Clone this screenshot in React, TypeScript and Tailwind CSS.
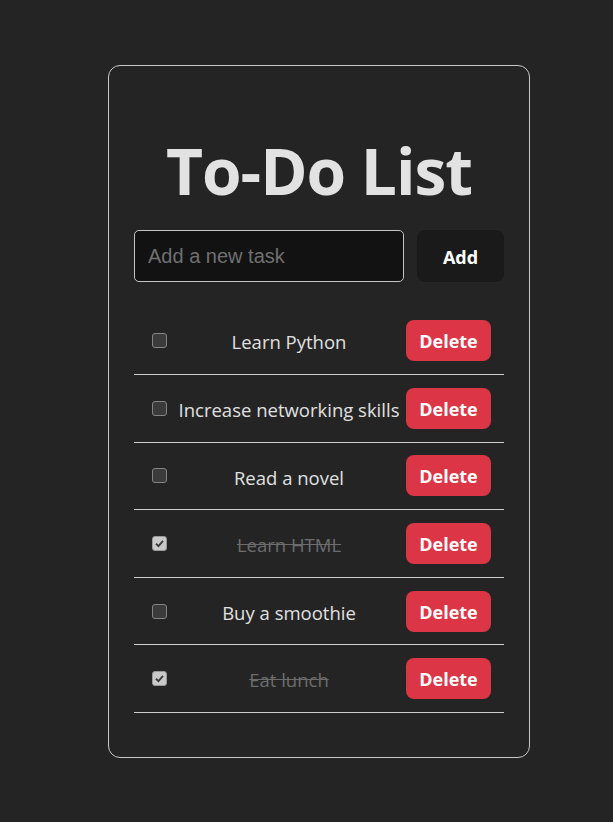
import { useState } from 'react';

interface Task {
  id: number;
  text: string;
  done: boolean;
}

const initialTasks: Task[] = [
  { id: 1, text: 'Learn Python', done: false },
  { id: 2, text: 'Increase networking skills', done: false },
  { id: 3, text: 'Read a novel', done: false },
  { id: 4, text: 'Learn HTML', done: true },
  { id: 5, text: 'Buy a smoothie', done: false },
  { id: 6, text: 'Eat lunch', done: true },
];

function Checkbox({ checked, onToggle }: { checked: boolean; onToggle: () => void }) {
  return (
    <button
      onClick={onToggle}
      className={
        checked
          ? 'w-[15px] h-[15px] shrink-0 rounded-[3px] bg-[#c9c9c9] border border-[#9a9a9a] flex items-center justify-center'
          : 'w-[15px] h-[15px] shrink-0 rounded-[3px] bg-[#3b3b3b] border border-[#858585]'
      }
    >
      {checked && (
        <svg viewBox="0 0 12 12" className="w-[11px] h-[11px]">
          <path d="M2.2 6.3 L4.9 8.9 L9.8 3.2" fill="none" stroke="#3a3a3a" strokeWidth="2" />
        </svg>
      )}
    </button>
  );
}

export default function App() {
  const [tasks, setTasks] = useState<Task[]>(initialTasks);
  const [draft, setDraft] = useState('');

  const addTask = () => {
    if (!draft.trim()) return;
    setTasks([...tasks, { id: Date.now(), text: draft.trim(), done: false }]);
    setDraft('');
  };

  return (
    <div className="min-h-[822px] bg-[#242424] pt-[65px]" style={{ fontFamily: '"Open Sans", "Noto Sans", sans-serif' }}>
      <div className="ml-[108px] w-[422px] border border-[#c8c8c8] rounded-[12px] px-[25px] pt-[70px] pb-[44px]">
        <h1 className="text-center text-[64px] leading-[1.1] font-bold text-[#e2e2e2] tracking-[-1px]">
          To-Do List
        </h1>

        <div className="flex gap-[13px] mt-[24px]">
          <input
            value={draft}
            onChange={(e) => setDraft(e.target.value)}
            placeholder="Add a new task"
            className="flex-1 min-w-0 h-[52px] rounded-[5px] border border-[#c4c4c4] bg-[#121212] px-[13px] text-[20px] text-[#dedede] placeholder:text-[#707070] outline-none"
            style={{ fontFamily: '"Liberation Sans", Arial, sans-serif' }}
          />
          <button
            onClick={addTask}
            className="w-[87px] h-[52px] rounded-[8px] bg-[#1a1a1a] text-white text-[18px] font-bold pt-[2px]"
          >
            Add
          </button>
        </div>

        <ul className="mt-[25px]">
          {tasks.map((task) => (
            <li
              key={task.id}
              className="h-[67.6px] flex items-center border-b border-[#cfcfcf] pl-[18px] pr-[13px]"
            >
              <Checkbox
                checked={task.done}
                onToggle={() =>
                  setTasks(tasks.map((t) => (t.id === task.id ? { ...t, done: !t.done } : t)))
                }
              />
              <span
                className={
                  task.done
                    ? 'flex-1 ml-[5px] pt-[3px] text-center text-[18.5px] text-[#6c6c6c] line-through whitespace-nowrap'
                    : 'flex-1 ml-[5px] pt-[3px] text-center text-[18.5px] text-[#e0e0e0] whitespace-nowrap'
                }
              >
                {task.text}
              </span>
              <button
                onClick={() => setTasks(tasks.filter((t) => t.id !== task.id))}
                className="w-[85px] h-[41px] rounded-[8px] bg-[#dc3545] text-white text-[18px] font-bold pt-[2px]"
              >
                Delete
              </button>
            </li>
          ))}
        </ul>
      </div>
    </div>
  );
}
